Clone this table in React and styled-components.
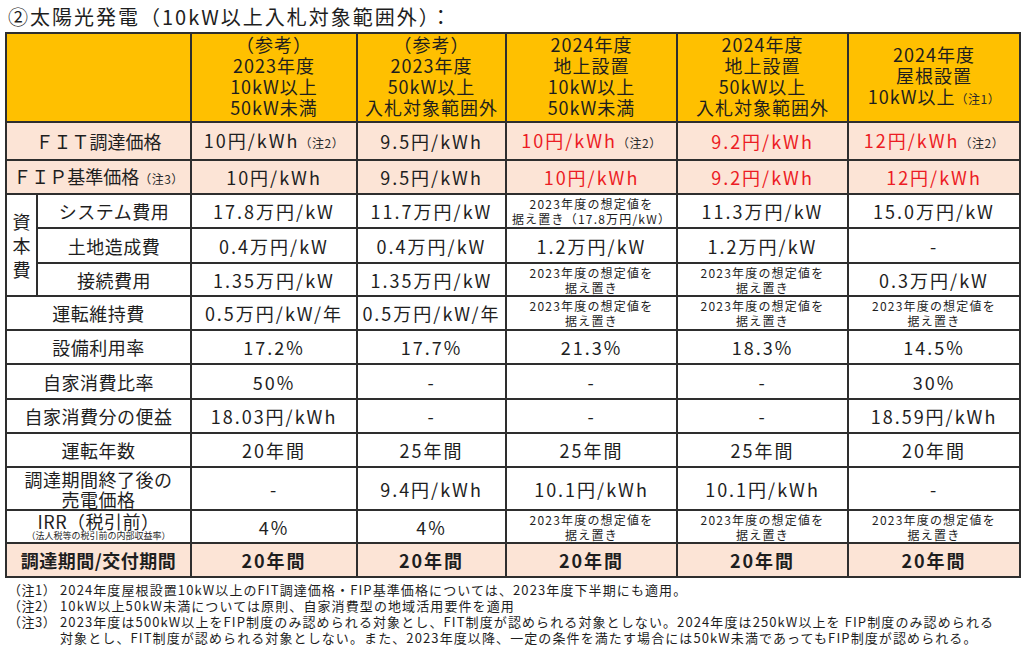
import React from 'react';
import styled, { createGlobalStyle } from 'styled-components';

const GlobalStyle = createGlobalStyle`
  body {
    margin: 0;
    background: #fff;
    font-family: "Noto Sans CJK JP", "Noto Sans", sans-serif;
    color: #1e1e1e;
  }
`;

const COLS = [31, 154, 166, 149, 171, 171, 172];

const Page = styled.div`
  width: 1024px;
  padding: 0 5px;
  box-sizing: border-box;
`;

const Title = styled.h1`
  margin: 0;
  height: 32px;
  display: flex;
  align-items: center;
  padding-left: 3px;
  font-size: 20px;
  font-weight: 400;
  letter-spacing: 2px;
`;

const Table = styled.table`
  border-collapse: collapse;
  table-layout: fixed;
  width: 1014px;
`;

const Row = styled.tr`
  height: ${p => p.$h}px;
  background: ${p => (p.$peach ? '#fce4d6' : '#fff')};
`;

const HeadCell = styled.th`
  border: 2px solid #2e2e2e;
  background: #ffc000;
  font-size: 18px;
  font-weight: 400;
  line-height: 21px;
  letter-spacing: 1px;
  text-align: center;
  vertical-align: middle;
  padding: 0 0 3px;
`;

const Label = styled.td`
  border: 2px solid #2e2e2e;
  padding: 0;
  text-align: center;
  vertical-align: middle;
  font-size: 18px;
  line-height: 20px;
  white-space: nowrap;
  letter-spacing: ${p => (p.$wide ? '0' : '0.5px')};
  font-weight: ${p => (p.$bold ? 600 : 400)};
`;

const SideLabel = styled.td`
  border: 2px solid #2e2e2e;
  padding: 0;
  text-align: center;
  vertical-align: middle;
  font-size: 18px;
  line-height: 24px;
`;

const Cell = styled.td`
  border: 2px solid #2e2e2e;
  padding: 0;
  text-align: center;
  vertical-align: middle;
  font-size: 18px;
  line-height: 20px;
  letter-spacing: 2px;
  white-space: nowrap;
  color: ${p => (p.$red ? '#ec1c24' : 'inherit')};
  font-weight: ${p => (p.$bold ? 600 : 400)};
`;

const Note = styled.span`
  font-size: 12px;
  letter-spacing: 0.5px;
  font-weight: 400;
  color: #2a2a2a;
`;

const Small = styled.div`
  font-size: 12px;
  line-height: 15px;
  letter-spacing: 1.2px;
`;

const Main = styled.div`
  line-height: 18px;
`;

const Tiny = styled.div`
  font-size: 9px;
  line-height: 11px;
  letter-spacing: 0;
`;

const Notes = styled.div`
  margin-top: 4px;
  font-size: 13px;
  line-height: 16px;
  letter-spacing: 1.1px;
`;

const NoteRow = styled.div`
  display: flex;
  white-space: nowrap;
`;

const Tag = styled.span`
  flex: 0 0 52px;
  padding-left: 3px;
  letter-spacing: 0.5px;
`;

const Keep = () => (
  <Small>
    2023年度の想定値を
    <br />
    据え置き
  </Small>
);

export default function App() {
  return (
    <Page>
      <GlobalStyle />
      <Title>②太陽光発電（10kW以上入札対象範囲外）：</Title>
      <Table>
        <colgroup>
          {COLS.map((w, i) => (
            <col key={i} style={{ width: w }} />
          ))}
        </colgroup>
        <tbody>
          <Row $h={89}>
            <HeadCell colSpan={2} />
            <HeadCell>（参考）<br />2023年度<br />10kW以上<br />50kW未満</HeadCell>
            <HeadCell>（参考）<br />2023年度<br />50kW以上<br />入札対象範囲外</HeadCell>
            <HeadCell>2024年度<br />地上設置<br />10kW以上<br />50kW未満</HeadCell>
            <HeadCell>2024年度<br />地上設置<br />50kW以上<br />入札対象範囲外</HeadCell>
            <HeadCell>2024年度<br />屋根設置<br />10kW以上<Note>（注1）</Note></HeadCell>
          </Row>
          <Row $h={38} $peach>
            <Label colSpan={2} $wide>ＦＩＴ調達価格</Label>
            <Cell>10円/kWh<Note>（注2）</Note></Cell>
            <Cell>9.5円/kWh</Cell>
            <Cell $red>10円/kWh<Note>（注2）</Note></Cell>
            <Cell $red>9.2円/kWh</Cell>
            <Cell $red>12円/kWh<Note>（注2）</Note></Cell>
          </Row>
          <Row $h={34} $peach>
            <Label colSpan={2} $wide>ＦＩＰ基準価格<Note>（注3）</Note></Label>
            <Cell>10円/kWh</Cell>
            <Cell>9.5円/kWh</Cell>
            <Cell $red>10円/kWh</Cell>
            <Cell $red>9.2円/kWh</Cell>
            <Cell $red>12円/kWh</Cell>
          </Row>
          <Row $h={34}>
            <SideLabel rowSpan={3}>資<br />本<br />費</SideLabel>
            <Label>システム費用</Label>
            <Cell>17.8万円/kW</Cell>
            <Cell>11.7万円/kW</Cell>
            <Cell>
              <Small>2023年度の想定値を<br />据え置き（17.8万円/kW）</Small>
            </Cell>
            <Cell>11.3万円/kW</Cell>
            <Cell>15.0万円/kW</Cell>
          </Row>
          <Row $h={35}>
            <Label>土地造成費</Label>
            <Cell>0.4万円/kW</Cell>
            <Cell>0.4万円/kW</Cell>
            <Cell>1.2万円/kW</Cell>
            <Cell>1.2万円/kW</Cell>
            <Cell>-</Cell>
          </Row>
          <Row $h={33}>
            <Label>接続費用</Label>
            <Cell>1.35万円/kW</Cell>
            <Cell>1.35万円/kW</Cell>
            <Cell><Keep /></Cell>
            <Cell><Keep /></Cell>
            <Cell>0.3万円/kW</Cell>
          </Row>
          <Row $h={34}>
            <Label colSpan={2}>運転維持費</Label>
            <Cell>0.5万円/kW/年</Cell>
            <Cell>0.5万円/kW/年</Cell>
            <Cell><Keep /></Cell>
            <Cell><Keep /></Cell>
            <Cell><Keep /></Cell>
          </Row>
          <Row $h={34}>
            <Label colSpan={2}>設備利用率</Label>
            <Cell>17.2%</Cell>
            <Cell>17.7%</Cell>
            <Cell>21.3%</Cell>
            <Cell>18.3%</Cell>
            <Cell>14.5%</Cell>
          </Row>
          <Row $h={35}>
            <Label colSpan={2}>自家消費比率</Label>
            <Cell>50%</Cell>
            <Cell>-</Cell>
            <Cell>-</Cell>
            <Cell>-</Cell>
            <Cell>30%</Cell>
          </Row>
          <Row $h={34}>
            <Label colSpan={2}>自家消費分の便益</Label>
            <Cell>18.03円/kWh</Cell>
            <Cell>-</Cell>
            <Cell>-</Cell>
            <Cell>-</Cell>
            <Cell>18.59円/kWh</Cell>
          </Row>
          <Row $h={34}>
            <Label colSpan={2}>運転年数</Label>
            <Cell>20年間</Cell>
            <Cell>25年間</Cell>
            <Cell>25年間</Cell>
            <Cell>25年間</Cell>
            <Cell>20年間</Cell>
          </Row>
          <Row $h={43}>
            <Label colSpan={2}>調達期間終了後の<br />売電価格</Label>
            <Cell>-</Cell>
            <Cell>9.4円/kWh</Cell>
            <Cell>10.1円/kWh</Cell>
            <Cell>10.1円/kWh</Cell>
            <Cell>-</Cell>
          </Row>
          <Row $h={33}>
            <Label colSpan={2}>
              <Main>IRR（税引前）</Main>
              <Tiny>（法人税等の税引前の内部収益率）</Tiny>
            </Label>
            <Cell>4%</Cell>
            <Cell>4%</Cell>
            <Cell><Keep /></Cell>
            <Cell><Keep /></Cell>
            <Cell><Keep /></Cell>
          </Row>
          <Row $h={34} $peach>
            <Label colSpan={2} $bold>調達期間/交付期間</Label>
            <Cell $bold>20年間</Cell>
            <Cell $bold>20年間</Cell>
            <Cell $bold>20年間</Cell>
            <Cell $bold>20年間</Cell>
            <Cell $bold>20年間</Cell>
          </Row>
        </tbody>
      </Table>
      <Notes>
        <NoteRow>
          <Tag>（注1）</Tag>
          <span>2024年度屋根設置10kW以上のFIT調達価格・FIP基準価格については、2023年度下半期にも適用。</span>
        </NoteRow>
        <NoteRow>
          <Tag>（注2）</Tag>
          <span>10kW以上50kW未満については原則、自家消費型の地域活用要件を適用</span>
        </NoteRow>
        <NoteRow>
          <Tag>（注3）</Tag>
          <span>
            2023年度は500kW以上をFIP制度のみ認められる対象とし、FIT制度が認められる対象としない。2024年度は250kW以上を FIP制度のみ認められる
            <br />
            対象とし、FIT制度が認められる対象としない。また、2023年度以降、一定の条件を満たす場合には50kW未満であってもFIP制度が認められる。
          </span>
        </NoteRow>
      </Notes>
    </Page>
  );
}
